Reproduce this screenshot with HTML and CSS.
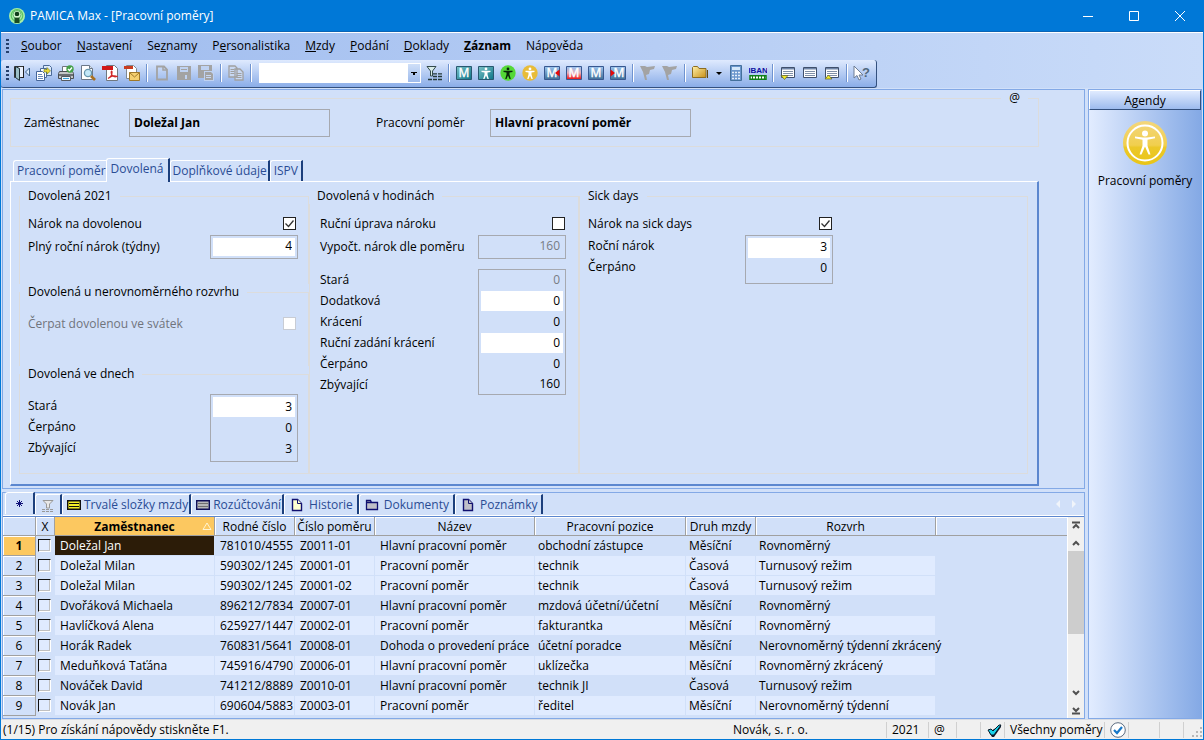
FILE: index.html
```html
<!DOCTYPE html>
<html lang="cs">
<head>
<meta charset="utf-8">
<title>PAMICA Max - [Pracovní poměry]</title>
<link rel="stylesheet" href="styles.css">
</head>
<body>
<svg class="defs" aria-hidden="true">
  <defs>
    <linearGradient id="gTeal" x1="0" y1="0" x2="1" y2="1"><stop offset="0" stop-color="#7cc4c8"/><stop offset="1" stop-color="#0c7486"/></linearGradient>
    <linearGradient id="gBlue" x1="0" y1="0" x2="0" y2="1"><stop offset="0" stop-color="#9cc4ee"/><stop offset="1" stop-color="#3f7098"/></linearGradient>
    <linearGradient id="gRed" x1="0" y1="0" x2="0" y2="1"><stop offset="0" stop-color="#8fc0f4"/><stop offset=".5" stop-color="#e8b0b8"/><stop offset="1" stop-color="#f00808"/></linearGradient>
    <linearGradient id="gGold" x1="0" y1="0" x2="1" y2="1"><stop offset="0" stop-color="#fff0a8"/><stop offset="1" stop-color="#c89018"/></linearGradient>
    <linearGradient id="gSun" x1="0" y1="0" x2="0" y2="1"><stop offset="0" stop-color="#f3d67c"/><stop offset=".55" stop-color="#f1cf4e"/><stop offset=".6" stop-color="#ecc829"/><stop offset="1" stop-color="#e9c517"/></linearGradient>
  </defs>
  <symbol id="person" viewBox="0 0 16 16"><circle cx="8" cy="3.9" r="1.4"/><path d="M3.5 5.8h9v1.2l-3 .5v2l1.3 4.4H9.5L8 10.6l-1.5 3.3H5.2l1.3-4.4v-2l-3-.5z"/></symbol>
  <symbol id="mask" viewBox="0 0 16 16"><path fill="#a3a3a3" d="M0 1h5l2 1 8-1-1 3-4 1-1 4-3 1 1 5H5L3 7z"/></symbol>
  <symbol id="page" viewBox="0 0 16 16"><path d="M3.5 2.5h5l4 4v7h-9z" stroke-width="1.400"/><path d="M8.500 2.500v4h4" stroke-width="1"/></symbol>
  <symbol id="list" viewBox="0 0 16 16"><path fill="#fff" stroke="#40506c" d="M1.500 2.500h13v10h-13z"/><path fill="#6f85a8" d="M2 3h12v1.500H2z"/><path stroke="#8090a8" d="M3 6.500h10M3 8.500h10M3 10.500h10"/></symbol>
</svg>

<div class="window">
  <header class="titlebar">
    <svg class="logo" viewBox="0 0 16 16" aria-hidden="true"><circle cx="8" cy="8" r="8" fill="#a5eda8"/><circle cx="8" cy="7.500" r="5.800" fill="none" stroke="#5cc463" stroke-width="1.200"/><circle cx="8" cy="6.500" r="4" fill="#d4f8d0" stroke="#4aa855" stroke-width=".8"/><circle cx="8" cy="6" r="2.300" fill="#0d3a18"/><path d="M5.500 9.500h5V15h-5z" fill="#1b4a22"/><path d="M6 8.800h4" stroke="#e0f8dc"/></svg>
    <h1 class="title">PAMICA Max - [Pracovní poměry]</h1>
    <button class="winbtn" aria-label="Minimalizovat"><svg viewBox="0 0 12 12"><path d="M1 6.500h10"/></svg></button>
    <button class="winbtn" aria-label="Maximalizovat"><svg viewBox="0 0 12 12"><path d="M1.500 1.500h9v9h-9z"/></svg></button>
    <button class="winbtn" aria-label="Zavřít"><svg viewBox="0 0 12 12"><path d="M1 1l10 10M11 1L1 11"/></svg></button>
  </header>

  <nav class="menubar">
    <span class="grip"></span>
    <button><u>S</u>oubor</button><button><u>N</u>astavení</button><button>Se<u>z</u>namy</button><button>P<u>e</u>rsonalistika</button><button><u>M</u>zdy</button><button><u>P</u>odání</button><button><u>D</u>oklady</button><button class="strong"><u>Z</u>áznam</button><button>Náp<u>o</u>věda</button>
  </nav>

  <div class="toolbar" role="toolbar">
    <span class="grip"></span>
    <button aria-label="Konec"><svg viewBox="0 0 16 16"><path fill="#e8f0fc" stroke="#333" d="M.5 1.500h9v11h-9z"/><path fill="#9cc0c8" stroke="#1f3038" d="M1.500 1.500l4 2v12l-4-3z"/><path stroke="#222" d="M9.500 1v12M7 12.500h3"/><path fill="#dcecff" stroke="#3c6088" d="M15.500 3v8l-4-4z"/></svg></button>
    <button aria-label="Agendy"><svg viewBox="0 0 16 16"><path fill="#dceafc" stroke="#4a6a98" d="M7.500.5h6l2 2v8h-8z"/><path fill="#f8fbff" stroke="#4a6a98" d="M4.500 3.500h6v9h-6z"/><path fill="#fff" stroke="#44659a" d="M.5 6.500h6l2 2v7h-8z"/><path stroke="#6888b8" d="M2 9.500h4M2 11.500h5M2 13.500h5"/><path fill="#e8d838" stroke="#707818" stroke-width=".6" d="M8 4.500h3V2.500l3.500 3.500L11 9V7H8z"/></svg></button>
    <button aria-label="Tisk"><svg viewBox="0 0 16 16"><path fill="#fff" stroke="#70747c" d="M4.500 1.500h7v6h-7z"/><path fill="#c4c6c8" stroke="#4c5054" d="M1.500 6.500h13l1 2v5H.5v-5z"/><path fill="#6a6e72" d="M1 9h14v2H1z"/><path fill="#eef6fc" stroke="#565a60" d="M3.500 11.500h9v4h-9z"/><path stroke="#38a0d8" d="M5 13.500h6"/><circle cx="12" cy="4" r="3.700" fill="#44a048"/><path fill="none" stroke="#fff" stroke-width="1.300" d="M10 4l1.500 1.500L14 2.500"/></svg></button>
    <button aria-label="Náhled"><svg viewBox="0 0 16 16"><path fill="#fff" stroke="#6c7888" d="M1.500.5h8l3 3v11h-11z"/><path fill="#dde6f0" stroke="#6c7888" d="M9.500.5v3h3"/><circle cx="8" cy="8" r="3.600" fill="#c4e8f8" stroke="#6898b0" stroke-width="1.300"/><path stroke="#a87020" stroke-width="2.600" d="M11 11l4 4"/></svg></button>
    <button aria-label="PDF"><svg viewBox="0 0 16 16"><path fill="#fff" stroke="#707880" d="M4.500.5h8l3 3v12h-11z"/><path fill="#d01818" d="M0 1h11v4H0z"/><path fill="none" stroke="#d02828" stroke-width="1.100" d="M6 13.500c3-2 4.500-4 4-7-.4-1-1.400 0-.5 2.500 1 2.500 3 3.500 5.500 2.500-2-1.200-5.500-.5-9 2"/></svg></button>
    <button aria-label="Odeslat e-mailem"><svg viewBox="0 0 16 16"><path fill="#fff" stroke="#808890" d="M2.500.5h7l3 3v10h-10z"/><path fill="#c83c20" d="M0 1h9v3H0z"/><path fill="#f4d070" stroke="#a07828" d="M5.500 7.500h10v8h-10z"/><path fill="none" stroke="#a07828" d="M5.500 7.500l5 4.500 5-4.500"/></svg></button>
    <span class="sep"></span>
    <button aria-label="Nový" disabled><svg viewBox="0 0 16 16"><path fill="none" stroke="#a3a3a3" stroke-width="1.800" d="M3 1.500h7l3 3v10H3z"/><path stroke="#a3a3a3" stroke-width="1.500" d="M9 2v3h4"/></svg></button>
    <button aria-label="Uložit" disabled><svg viewBox="0 0 16 16"><path fill="#a3a3a3" d="M1 1h14v14H1z"/><path fill="#bfd2f2" d="M4 2h8v5H4zM9 10h2v4H9z"/><path stroke="#a3a3a3" d="M5 4.500h6"/></svg></button>
    <button aria-label="Uložit kopii" disabled><svg viewBox="0 0 16 16"><path fill="#a3a3a3" d="M0 0h14v13H0z"/><path fill="#bfd2f2" d="M3 1h8v4H3zM6 6h8l2 2v8H6z"/><path fill="#a3a3a3" d="M7 7h6l2 2v6H7z"/><path stroke="#c8d8f4" d="M8 10.500h5M8 12.500h5"/></svg></button>
    <span class="sep"></span>
    <button aria-label="Kopírovat" disabled><svg viewBox="0 0 16 16"><path fill="#c8d8f2" stroke="#a0a0a0" stroke-width="1.300" d="M1 1h6l2 2v9H1zM7 4h5l3 3v8H7z"/><path stroke="#a0a0a0" d="M2.500 4.500h4M2.500 6.500h4M2.500 8.500h4M8.500 8.500h5M8.500 10.500h5M8.500 12.500h5"/></svg></button>
    <span class="sep"></span>
    <select class="combo" aria-label="Hledat"><option></option></select>
    <button aria-label="Filtr"><svg viewBox="0 0 16 16"><path fill="#d8ece8" stroke="#334a4c" d="M1 1.500h9L6.500 6v5h-2V6z"/><path stroke="#243838" stroke-width="1.300" stroke-dasharray="4 1" d="M2 14.500h14M7 11.500h9M7 8.800h9"/></svg></button>
    <span class="sep"></span>
    <button aria-label="Mzdy"><svg viewBox="0 0 16 16"><path fill="url(#gTeal)" stroke="#285870" d="M.5 1.500h15v13H.5z"/><text x="8" y="12" class="m">M</text></svg></button>
    <button aria-label="Zaměstnanci"><svg viewBox="0 0 16 16"><path fill="url(#gTeal)" stroke="#285870" d="M.5 1.500h15v13H.5z"/><use href="#person" fill="#fff"/></svg></button>
    <button aria-label="Personalistika"><svg viewBox="0 0 16 16"><circle cx="8" cy="8" r="7.700" fill="#54d836"/><use href="#person" fill="#082808"/></svg></button>
    <button aria-label="Pracovní poměry"><svg viewBox="0 0 16 16"><circle cx="8" cy="8" r="7.700" fill="#e8bc38"/><use href="#person" fill="#fff"/></svg></button>
    <button aria-label="Předchozí mzda"><svg viewBox="0 0 16 16"><path fill="url(#gBlue)" stroke="#385890" d="M.5 1.500h15v13H.5z"/><text x="8" y="12" class="m">M</text><path fill="#e80808" d="M15.500 4.500v7L11 8z"/></svg></button>
    <button aria-label="Smazat mzdu"><svg viewBox="0 0 16 16"><path fill="url(#gRed)" stroke="#385890" d="M.5 1.500h15v13H.5z"/><text x="8" y="12" class="m">M</text></svg></button>
    <button aria-label="Mzda"><svg viewBox="0 0 16 16"><path fill="url(#gBlue)" stroke="#385890" d="M.5 1.500h15v13H.5z"/><text x="8" y="12" class="m">M</text></svg></button>
    <button aria-label="Další mzda"><svg viewBox="0 0 16 16"><path fill="url(#gBlue)" stroke="#385890" d="M.5 1.500h15v13H.5z"/><text x="9" y="12" class="m">M</text><path fill="#e80808" d="M.5 4.500v7L5 8z"/></svg></button>
    <span class="sep"></span>
    <button aria-label="Značka" disabled><svg viewBox="0 0 16 16"><use href="#mask"/></svg></button>
    <button aria-label="Zrušit značku" disabled><svg viewBox="0 0 16 16"><use href="#mask"/></svg></button>
    <span class="sep"></span>
    <button aria-label="Složka"><svg viewBox="0 0 16 16"><path fill="#604810" d="M2 13h14V5h-1v8z"/><path fill="url(#gGold)" stroke="#8c6c20" d="M.5 12.500v-10l1-1h4l1.500 2h7v9z"/></svg></button>
    <button class="drop" aria-label="Další složky"><svg viewBox="0 0 16 16"><path d="M5 7h6l-3 3z"/></svg></button>
    <button aria-label="Kalkulačka"><svg viewBox="0 0 16 16"><path fill="#6a96cc" stroke="#44709c" d="M2.500.5h11v15h-11z"/><path fill="#d4e8fa" d="M4 2h8v3H4z"/><path stroke="#e4eefa" stroke-width="1.400" stroke-dasharray="2 1" d="M4 7.500h8M4 10.500h8M4 13.500h8"/></svg></button>
    <button aria-label="Kontrola IBAN"><svg viewBox="0 0 18 16"><text x="9" y="8" class="iban">IBAN</text><path fill="#fff" stroke="#108018" stroke-width="1.500" d="M1 10.800h16v3.500H1z"/><path stroke="#108018" stroke-dasharray="1 2" stroke-width="3" d="M3 12.500h13"/></svg></button>
    <span class="sep"></span>
    <button aria-label="Horní tabulka"><svg viewBox="0 0 16 16"><use href="#list"/><path fill="#f0e828" stroke="#606028" stroke-width=".7" d="M1 10.500h7l-3.500 4z"/></svg></button>
    <button aria-label="Tabulka"><svg viewBox="0 0 16 16"><use href="#list"/></svg></button>
    <button aria-label="Dolní tabulka"><svg viewBox="0 0 16 16"><use href="#list"/><path fill="#f0e828" stroke="#606028" stroke-width=".7" d="M1 14h7l-3.500-4z"/></svg></button>
    <span class="sep"></span>
    <button aria-label="Kontextová nápověda"><svg class="help" viewBox="0 0 18 18"><path fill="#fff" stroke="#6c7c94" d="M1 2v12l3-2.500 2 4.500 2-1-2-4h4z"/><text x="13" y="13" class="q">?</text></svg></button>
  </div>

  <div class="main">
    <div class="work">
      <section class="panel form">
        <fieldset class="head">
          <legend>@</legend>
          <label for="emp">Zaměstnanec</label><input id="emp" value="Doležal Jan" readonly>
          <label for="rel">Pracovní poměr</label><input id="rel" value="Hlavní pracovní poměr" readonly>
        </fieldset>

        <div class="tabs" role="tablist">
          <button role="tab">Pracovní poměr</button><button role="tab" class="active" aria-selected="true">Dovolená</button><button role="tab">Doplňkové údaje</button><button role="tab">ISPV</button>
        </div>
        <div class="page">
          <div class="col first">
            <fieldset class="year">
              <legend>Dovolená 2021</legend>
              <div class="check"><label for="c1">Nárok na dovolenou</label><input type="checkbox" id="c1" checked></div>
              <div class="vals"><label for="v1">Plný roční nárok (týdny)</label><div class="box single"><input id="v1" value="4" class="edit"></div></div>
            </fieldset>
            <fieldset class="uneven">
              <legend>Dovolená u nerovnoměrného rozvrhu</legend>
              <div class="check off"><label for="c2">Čerpat dovolenou ve svátek</label><input type="checkbox" id="c2" disabled></div>
            </fieldset>
            <fieldset class="days">
              <legend>Dovolená ve dnech</legend>
              <div class="vals">
                <div class="names"><label for="d1">Stará</label><label for="d2">Čerpáno</label><label for="d3">Zbývající</label></div>
                <div class="box"><input id="d1" value="3" class="edit"><input id="d2" value="0" readonly><input id="d3" value="3" readonly></div>
              </div>
            </fieldset>
          </div>
          <div class="col">
            <fieldset class="hours">
              <legend>Dovolená v hodinách</legend>
              <div class="check"><label for="c3">Ruční úprava nároku</label><input type="checkbox" id="c3"></div>
              <div class="vals"><label for="v2">Vypočt. nárok dle poměru</label><div class="box single"><input id="v2" value="160" disabled></div></div>
              <div class="vals second">
                <div class="names"><label for="h1">Stará</label><label for="h2">Dodatková</label><label for="h3">Krácení</label><label for="h4">Ruční zadání krácení</label><label for="h5">Čerpáno</label><label for="h6">Zbývající</label></div>
                <div class="box"><input id="h1" value="0" disabled><input id="h2" value="0" class="edit"><input id="h3" value="0" readonly><input id="h4" value="0" class="edit"><input id="h5" value="0" readonly><input id="h6" value="160" readonly></div>
              </div>
            </fieldset>
          </div>
          <div class="col">
            <fieldset class="sick">
              <legend>Sick days</legend>
              <div class="check"><label for="c4">Nárok na sick days</label><input type="checkbox" id="c4" checked></div>
              <div class="vals">
                <div class="names"><label for="s1">Roční nárok</label><label for="s2">Čerpáno</label></div>
                <div class="box"><input id="s1" value="3" class="edit"><input id="s2" value="0" readonly></div>
              </div>
            </fieldset>
          </div>
        </div>
      </section>

      <section class="panel records">
        <div class="rtabs" role="tablist">
          <button role="tab" class="active" aria-label="Seznam"><svg viewBox="0 0 16 16"><path stroke="#101078" d="M7.500 4v7M4 7.500h7M5 5l5 5M10 5l-5 5"/></svg></button>
          <button role="tab" aria-label="Filtr"><svg viewBox="0 0 16 16"><path fill="#e8e8e8" stroke="#989898" d="M3 3.500h10L9.500 7v4h-3V7z"/><path stroke="#989898" stroke-dasharray="3 1" d="M2 12.500h12M2 14.500h12"/></svg></button>
          <button role="tab"><svg viewBox="0 0 16 16"><path fill="#f4f028" stroke="#101010" stroke-width="1.400" d="M1.700 3.700h12.600v8.600H1.700z"/><path stroke="#101010" d="M3 6.500h10M3 9.500h10"/></svg>Trvalé složky mzdy</button>
          <button role="tab"><svg viewBox="0 0 16 16"><path fill="#b8b8b8" stroke="#101058" stroke-width="1.400" d="M1.700 3.700h12.600v8.600H1.700z"/><path stroke="#707070" d="M3 6.500h10M3 9.500h10"/></svg>Rozúčtování</button>
          <button role="tab" class="roomy"><svg viewBox="0 0 16 16"><use href="#page" fill="#ffffd0" stroke="#101070"/></svg>Historie</button>
          <button role="tab" class="roomy"><svg viewBox="0 0 16 16"><path fill="#c0c0c8" stroke="#101070" stroke-width="1.300" d="M2.500 12.500v-9h4l1 2h6v7zM2.500 5.500h6"/></svg>Dokumenty</button>
          <button role="tab" class="roomy"><svg viewBox="0 0 16 16"><use href="#page" fill="#c0c0c8" stroke="#101070"/></svg>Poznámky</button>
          <svg class="scroll" viewBox="0 0 24 10" aria-hidden="true"><path fill="#f0f4fa" d="M5 1v8L1 5zM17 1v8l4-4z"/></svg>
        </div>
        <div class="list">
          <div class="tablewrap">
            <table>
              <colgroup><col class="c-num"><col class="c-x"><col class="c-name"><col class="c-id"><col class="c-id"><col class="c-title"><col class="c-pos"><col class="c-kind"><col class="c-plan"><col></colgroup>
              <thead><tr><th></th><th>X</th><th class="sorted">Zaměstnanec<svg viewBox="0 0 10 8"><path d="M1 7.500L5 1l4 6.500z"/></svg></th><th>Rodné číslo</th><th>Číslo poměru</th><th>Název</th><th>Pracovní pozice</th><th>Druh mzdy</th><th>Rozvrh</th><th></th></tr></thead>
              <tbody>
                <tr class="current"><th>1</th><td><input type="checkbox" aria-label="Řádek 1"></td><td>Doležal Jan</td><td>781010/4555</td><td>Z0011-01</td><td>Hlavní pracovní poměr</td><td>obchodní zástupce</td><td>Měsíční</td><td>Rovnoměrný</td><td></td></tr>
                <tr class="light"><th>2</th><td><input type="checkbox" aria-label="Řádek 2"></td><td>Doležal Milan</td><td>590302/1245</td><td>Z0001-01</td><td>Pracovní poměr</td><td>technik</td><td>Časová</td><td>Turnusový režim</td><td></td></tr>
                <tr class="light"><th>3</th><td><input type="checkbox" aria-label="Řádek 3"></td><td>Doležal Milan</td><td>590302/1245</td><td>Z0001-02</td><td>Pracovní poměr</td><td>technik</td><td>Časová</td><td>Turnusový režim</td><td></td></tr>
                <tr><th>4</th><td><input type="checkbox" aria-label="Řádek 4"></td><td>Dvořáková Michaela</td><td>896212/7834</td><td>Z0007-01</td><td>Hlavní pracovní poměr</td><td>mzdová účetní/účetní</td><td>Měsíční</td><td>Rovnoměrný</td><td></td></tr>
                <tr class="light"><th>5</th><td><input type="checkbox" aria-label="Řádek 5"></td><td>Havlíčková Alena</td><td>625927/1447</td><td>Z0002-01</td><td>Pracovní poměr</td><td>fakturantka</td><td>Měsíční</td><td>Rovnoměrný</td><td></td></tr>
                <tr><th>6</th><td><input type="checkbox" aria-label="Řádek 6"></td><td>Horák Radek</td><td>760831/5641</td><td>Z0008-01</td><td>Dohoda o provedení práce</td><td>účetní poradce</td><td>Měsíční</td><td>Nerovnoměrný týdenní zkrácený</td><td></td></tr>
                <tr class="light"><th>7</th><td><input type="checkbox" aria-label="Řádek 7"></td><td>Meduňková Taťána</td><td>745916/4790</td><td>Z0006-01</td><td>Hlavní pracovní poměr</td><td>uklízečka</td><td>Měsíční</td><td>Rovnoměrný zkrácený</td><td></td></tr>
                <tr><th>8</th><td><input type="checkbox" aria-label="Řádek 8"></td><td>Nováček David</td><td>741212/8889</td><td>Z0010-01</td><td>Hlavní pracovní poměr</td><td>technik JI</td><td>Časová</td><td>Turnusový režim</td><td></td></tr>
                <tr class="light"><th>9</th><td><input type="checkbox" aria-label="Řádek 9"></td><td>Novák Jan</td><td>690604/5883</td><td>Z0003-01</td><td>Pracovní poměr</td><td>ředitel</td><td>Měsíční</td><td>Nerovnoměrný týdenní</td><td></td></tr>
              </tbody>
            </table>
          </div>
          <div class="scrollbar">
            <button aria-label="První"><svg viewBox="0 0 10 10"><path d="M1 1.500h8M2 7l3-3 3 3"/></svg></button>
            <button aria-label="Nahoru"><svg viewBox="0 0 10 10"><path d="M2 7l3-3 3 3"/></svg></button>
            <div class="track"><div class="thumb"></div></div>
            <button aria-label="Dolů"><svg viewBox="0 0 10 10"><path d="M2 3l3 3 3-3"/></svg></button>
            <button aria-label="Poslední"><svg viewBox="0 0 10 10"><path d="M1 8.500h8M2 3l3 3 3-3"/></svg></button>
          </div>
        </div>
      </section>
    </div>

    <aside class="agendas">
      <h2>Agendy</h2>
      <button class="agenda">
        <svg viewBox="0 0 44 44"><circle cx="22" cy="22" r="22" fill="url(#gSun)"/><circle cx="22" cy="22" r="17.500" fill="none" stroke="#fff" stroke-width="2"/><circle cx="22" cy="12.500" r="3" fill="#fff"/><path fill="#fff" d="M12 15.500l8 1h4l8-1v1.800l-7.500 1.500v6L27.500 33.500h-2L22 25.500l-3.500 8h-2l3-8.700v-6L12 17.300z"/></svg>
        Pracovní poměry
      </button>
    </aside>
  </div>

  <footer class="statusbar">
    <span class="hint">(1/15) Pro získání nápovědy stiskněte F1.</span>
    <span class="company">Novák, s. r. o.</span>
    <span class="s-year">2021</span>
    <span class="s-at">@</span>
    <span class="s-gap"></span>
    <span class="s-gap"><svg viewBox="0 0 16 16"><path fill="#101828" d="M3 10l3 5h2l7-10V3z"/><path fill="#18d0e8" stroke="#081828" d="M2 8l3-1 2 2 6-6h2L8 13H5z"/></svg></span>
    <span class="s-filter">Všechny poměry</span>
    <span class="s-ok"><svg viewBox="0 0 16 16"><circle cx="8" cy="8" r="7.300" fill="#fff" stroke="#5c6c80"/><path fill="none" stroke="#1878c8" stroke-width="2.200" d="M4 8l3 3 5-6"/></svg></span>
    <span class="s-wide"></span>
    <span class="s-gap"></span>
    <span class="s-grip"><svg viewBox="0 0 12 12"><path fill="#b8b8b8" d="M8 1h2v2H8zM4 5h2v2H4zM8 5h2v2H8zM0 9h2v2H0zM4 9h2v2H4zM8 9h2v2H8z"/></svg></span>
  </footer>
</div>
</body>
</html>
```
FILE: styles.css
```css
:root {
  --panel: #d1e0f9;
  --light: #e0ebff;
  --edge: #83a9e6;
  --deep: #5c87cf;
  --navy: #1c3f7c;
  --link: #2a4c94;
  --group: #dcdcdc;
}

* { box-sizing: border-box; }

body {
  margin: 0;
  font: 12px/16px "Open Sans", "Noto Sans", sans-serif;
  color: #000;
}

button, input, select { font: inherit; color: inherit; margin: 0; }
button { padding: 0; border: 0; background: none; white-space: nowrap; }
svg { fill: none; display: block; }
.defs { position: absolute; width: 0; height: 0; }

.window {
  display: flex;
  flex-direction: column;
  min-height: 100vh;
  border: 1px solid #0078d7;
  border-top: 0;
  background: linear-gradient(90deg, #9ebbee, #cadcf9);
}

/* title bar */
.titlebar {
  display: flex;
  align-items: center;
  height: 32px;
  padding-left: 8px;
  background: #0078d7;
  border-bottom: 1px solid #0c64b4;
  color: #fff;
}
.logo { width: 16px; height: 16px; }
.title { flex: 1; margin: 0 0 0 5px; font-size: 12px; font-weight: 400; }
.winbtn { width: 46px; height: 30px; display: grid; place-items: center; }
.winbtn svg { width: 12px; height: 12px; stroke: #fff; }

/* menu */
.menubar {
  display: flex;
  align-items: center;
  height: 28px;
  padding: 0 0 2px 5px;
  border-top: 1px solid #fff;
}
.menubar button { padding: 0 8px 0 7px; }
.menubar .strong { font-weight: 700; }
.menubar .grip { margin-right: 5px; }
.grip {
  width: 3px;
  height: 14px;
  background: repeating-linear-gradient(#26406c 0 2px, transparent 2px 4px);
}

/* toolbar */
.toolbar {
  display: flex;
  align-items: center;
  align-self: flex-start;
  height: 28px;
  padding: 0 3px 2px 5px;
  background: linear-gradient(#dfeafe, #8aade8);
  border-bottom: 1px solid #33507e;
  border-right: 1px solid #33507e;
  border-radius: 3px;
}
.toolbar .grip { margin-right: 2px; }
.toolbar button { width: 22px; height: 22px; display: grid; place-items: center; }
.toolbar svg { width: 16px; height: 16px; }
.toolbar .help { width: 18px; height: 18px; }
.toolbar .drop { width: 14px; }
.drop path { fill: #000; }
.toolbar [aria-label="Kontrola IBAN"] svg { width: 18px; }
.sep {
  width: 2px;
  height: 18px;
  margin: 0 3px;
  background: linear-gradient(90deg, #6f93d0 50%, #fff 50%);
}
.combo {
  width: 162px;
  height: 20px;
  margin: 0 2px 0 4px;
  border: 1px solid #fff;
  border-radius: 0;
  appearance: none;
  background:
    linear-gradient(135deg, #000 50%, transparent 50%) right 3px top 8px / 3px 3px no-repeat,
    linear-gradient(225deg, #000 50%, transparent 50%) right 6px top 8px / 3px 3px no-repeat,
    linear-gradient(#cfdff8, #9ebbec) right / 12px 100% no-repeat,
    #fff;
}
.m { font: 400 12px "Open Sans", sans-serif; fill: #fff; stroke: #fff; stroke-width: .4px; text-anchor: middle; }
.iban { font: 700 8px "Liberation Sans", sans-serif; fill: #1010a0; text-anchor: middle; }
.q { font: 700 13px "Liberation Sans", sans-serif; fill: #50687c; text-anchor: middle; }

/* work area */
.main { flex: 1; display: flex; gap: 3px; padding: 1px 1px 0; background: var(--panel); }
.work { flex: 1; min-width: 0; display: flex; flex-direction: column; gap: 3px; }
.panel { border: 1px solid var(--edge); background: var(--panel); }

.form { flex: 1; padding: 0 45px 2px 7px; }
fieldset { margin: 0; min-width: 0; border: 1px solid var(--group); }
legend { padding: 0 8px; }

.head {
  display: flex;
  align-items: center;
  height: 57px;
  padding: 0 0 7px 13px;
}
.head legend { margin-left: auto; margin-right: 10px; }
.head label { width: 105px; }
.head label:nth-of-type(2) { width: 114px; margin-left: 46px; }
.head input {
  width: 201px;
  height: 28px;
  padding: 0 4px 1px;
  border: 1px solid #a6a9b0;
  background: none;
  font-weight: 700;
}

.tabs { display: flex; align-items: flex-end; height: 34px; padding-left: 3px; }
.tabs button {
  height: 21px;
  padding: 0 1px 1px 2px;
  color: var(--link);
  border: solid #fff;
  border-width: 1px 0 0 1px;
  border-right: 2px solid var(--navy);
  border-radius: 3px 0 0 0;
}
.tabs button:first-child { border-right: 0; padding: 0 0 1px 3px; }
.tabs button:last-child { padding: 0 3px 1px; }
.tabs .active {
  position: relative;
  height: 24px;
  padding: 0 4px 3px;
  margin-bottom: -1px;
  background: var(--panel);
}
.page {
  display: grid;
  grid-template-columns: 290px 270px 1fr;
  min-height: 305px;
  padding: 6px 9px 10px 8px;
  border: solid #fff;
  border-width: 1px 2px 2px 1px;
  border-right-color: var(--deep);
  border-bottom-color: var(--deep);
}
.col { display: flex; flex-direction: column; }
.col fieldset { padding: 0 12px 0 8px; border-bottom: 0; }
.first fieldset { padding-right: 10px; }
.col fieldset:last-child { flex: 1; border-bottom: 1px solid var(--group); }
.col .year { height: 96px; }
.col .uneven { height: 82px; }
.col .hours { padding-left: 10px; }
.col .hours legend { margin-left: -11px; }
.col legend { margin-left: -8px; }

.check { display: flex; justify-content: space-between; align-items: center; height: 21px; margin-top: 9px; }
.check input { margin-right: 1px; }
.first .check input { margin-right: 2px; }
.uneven .check { margin-top: 13px; }
.off label { color: #70747c; }
.vals { display: flex; justify-content: space-between; }
.check + .vals { margin-top: 1px; line-height: 24px; }
.names { display: grid; grid-auto-rows: 20px; row-gap: 1px; padding-top: 1px; line-height: 20px; }
.box {
  display: grid;
  grid-auto-rows: 20px;
  row-gap: 1px;
  width: 88px;
  padding: 0 2px;
  border: 1px solid #a6a9b0;
}
.box.single { height: 24px; padding: 2px; }
.box input {
  width: 100%;
  height: 20px;
  padding: 0 3px 2px;
  border: 0;
  background: none;
  text-align: right;
}
.box.single input { height: 18px; }
.box .edit { background: #fff; }
.box input:disabled { color: #787c84; }
.days .vals { margin-top: 12px; }
.days .box { padding: 2px; }
.days .names { padding-top: 2px; }
.vals.second { margin-top: 10px; }
.second .box { grid-template-rows: repeat(5, 20px) 17px; }
.second .box input:last-child { height: 17px; padding-bottom: 0; }
.col .sick { padding-right: 0; }
.sick .check, .sick .vals { width: 245px; }
.sick .box { height: 49px; padding: 2px; }

input[type="checkbox"] {
  appearance: none;
  width: 13px;
  height: 13px;
  border: 1px solid #222;
  background: #fff;
}
input[type="checkbox"]:disabled { border-color: #c8ccd4; }
input[type="checkbox"]:checked {
  background: #fff url('data:image/svg+xml,<svg xmlns="http://www.w3.org/2000/svg" viewBox="0 0 11 11"><path d="M1.500 5.500l3 3 5-6" fill="none" stroke="%23333" stroke-width="1.300"/></svg>');
}

/* records */
.rtabs {
  display: flex;
  align-items: flex-end;
  height: 24px;
  padding: 0 0 0 2px;
  border-bottom: 1px solid var(--deep);
  box-shadow: inset 0 -2px 0 -1px #fff;
}
.rtabs button {
  display: flex;
  align-items: center;
  justify-content: center;
  gap: 2px;
  height: 20px;
  margin-bottom: 2px;
  padding: 0 1px 0 3px;
  color: var(--link);
  border: 1px solid #fff;
  border-width: 1px 0 0 1px;
  border-right: 2px solid var(--navy);
  border-radius: 3px 0 0 0;
}
.rtabs .roomy { gap: 4px; padding: 0 4px; }
.rtabs button:nth-child(-n+2) { width: 27px; padding: 0; }
.rtabs .active:first-child { width: 30px; height: 22px; }
.rtabs button svg { width: 16px; height: 16px; }
.scroll { width: 24px; height: 10px; margin: 0 5px 7px auto; }

.list { display: flex; height: 201px; }
.tablewrap { flex: 1; min-width: 0; overflow: hidden; }
table { width: 100%; table-layout: fixed; border-collapse: separate; border-spacing: 0; }
.c-num { width: 33px; }
.c-x { width: 19px; }
.c-name, .c-title { width: 160px; }
.c-id { width: 80px; }
.c-pos { width: 151px; }
.c-kind { width: 70px; }
.c-plan { width: 180px; }
th, td { padding: 0; height: 20px; white-space: nowrap; font-weight: 400; line-height: 18px; }
th {
  border: solid #a0a0a0;
  border-width: 0 1px 1px 0;
  box-shadow: inset 1px 1px 0 #fff;
  text-align: center;
}
thead th { height: 19px; line-height: 17px; }
thead th:last-child { border-right: 0; }
thead .sorted { background: #fcc860; font-weight: 700; position: relative; box-shadow: none; }
.sorted svg { position: absolute; right: 2px; top: 5px; width: 10px; height: 8px; stroke: #fff4d0; }
td { padding-left: 3px; border: solid var(--panel); border-width: 0 1px 1px 0; }
td:nth-child(3), td:nth-child(4), td:nth-child(5), td:nth-child(6) { padding-left: 5px; }
td:nth-child(2) { padding-left: 2px; }
.light td:not(:nth-child(2)):not(:last-child) { background: var(--light); }
.current th { background: #fcc860; font-weight: 700; }
.current td:nth-child(3) { background: #2c1c08; color: #fff; }
td input[type="checkbox"] {
  display: block;
  border: 1px solid #fff;
  border-top-color: #101010;
  border-left-color: #101010;
  background: var(--light);
  box-shadow: inset -1px -1px 0 #c0c0c0;
}

.scrollbar { display: flex; flex-direction: column; width: 17px; background: #f0f0f0; border-left: 1px solid #fff; }
.scrollbar button { height: 17px; display: grid; place-items: center; }
.scrollbar svg { width: 10px; height: 10px; stroke: #505050; stroke-width: 2; }
.track { flex: 1; }
.thumb { height: 83px; background: #cdcdcd; }

/* agendas */
.agendas {
  width: 114px;
  border: 1px solid var(--edge);
  background: linear-gradient(90deg, #e2ecff, #84a9e5);
}
.agendas h2 {
  margin: 0;
  height: 20px;
  line-height: 19px;
  text-align: center;
  font-size: 12px;
  font-weight: 400;
  background: linear-gradient(#e0ebff, #9dbbee);
  border: 1px solid #fff;
  border-right-color: #33507e;
  border-bottom-color: #33507e;
}
.agenda { display: flex; flex-direction: column; align-items: center; gap: 8px; width: 100%; padding-top: 11px; }
.agenda svg { width: 44px; height: 44px; }

/* status bar */
.statusbar {
  display: flex;
  align-items: center;
  height: 20px;
  background: #f0f0f0;
  border-top: 1px solid #d8dce4;
  white-space: nowrap;
}
.statusbar span { height: 16px; line-height: 16px; padding-left: 5px; border-left: 1px solid #d0d0d0; }
.statusbar .hint { flex: 1; padding-left: 2px; border: 0; }
.statusbar .company { width: 153px; padding: 0; border: 0; }
.s-year { width: 42px; }
.s-at { width: 28px; }
.s-gap { width: 24px; }
.s-wide { width: 31px; }
.s-filter { width: 100px; }
.s-ok { width: 24px; }
.statusbar .s-grip { width: 20px; padding: 4px 0 0 8px; }
.statusbar svg { width: 16px; height: 16px; }
.statusbar .s-grip svg { width: 12px; height: 12px; }
```
